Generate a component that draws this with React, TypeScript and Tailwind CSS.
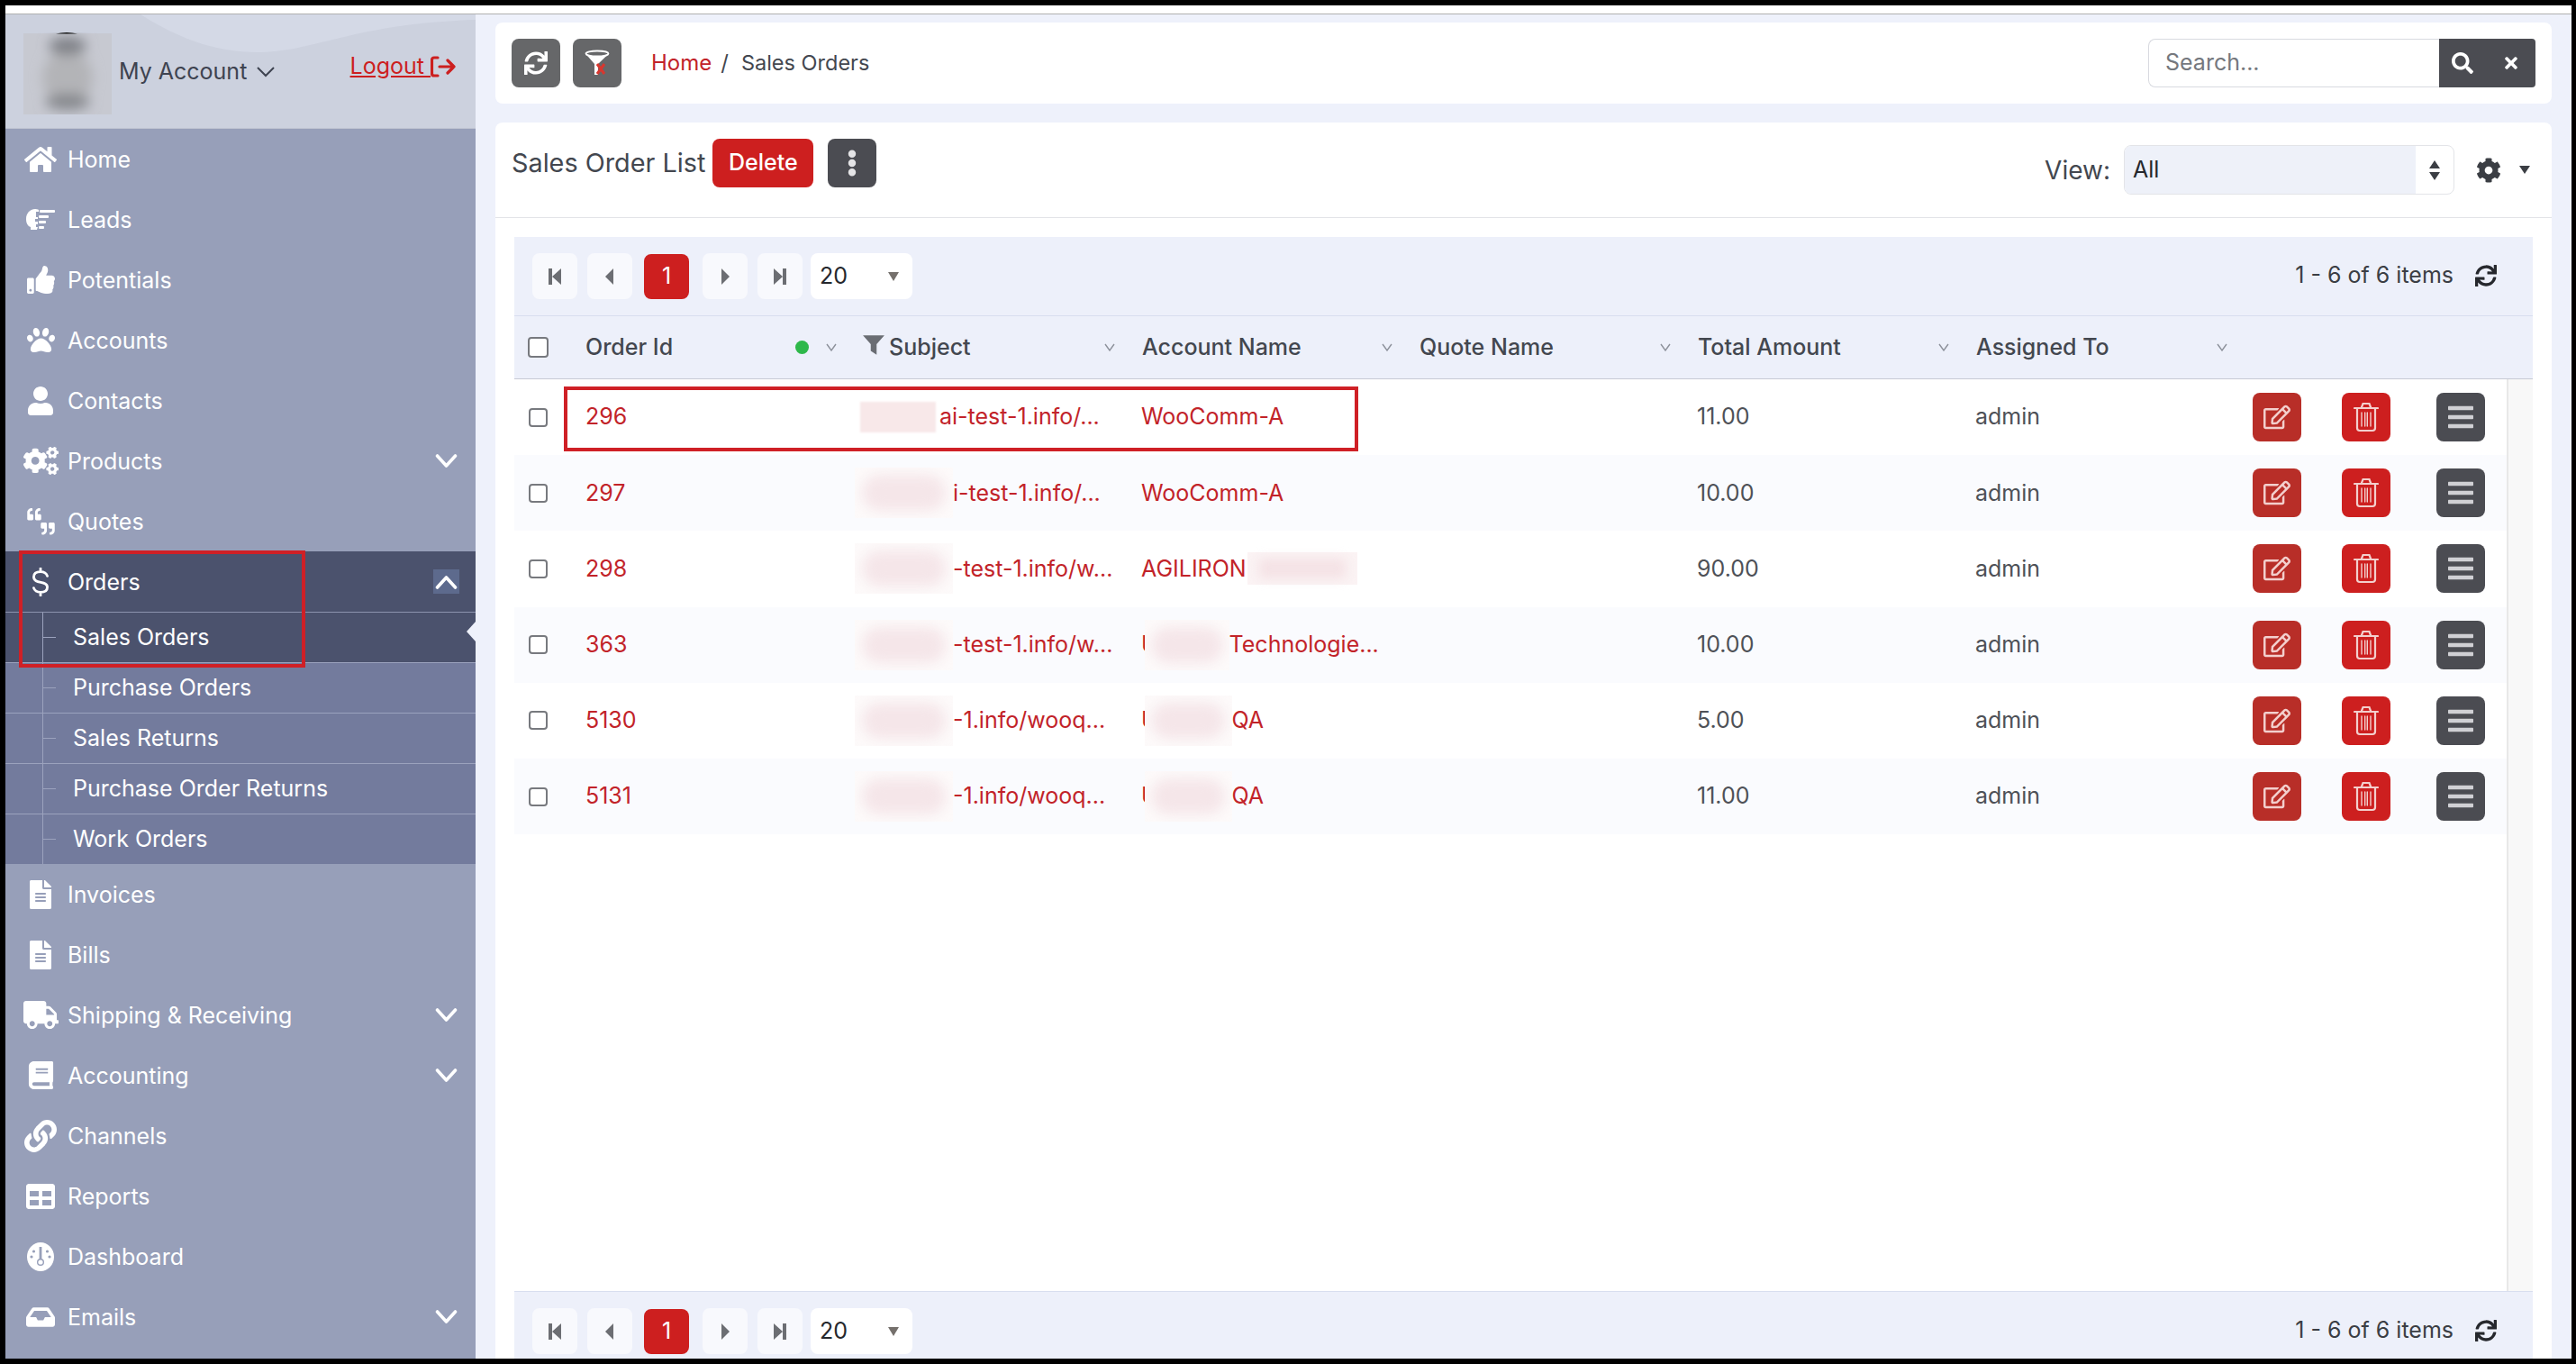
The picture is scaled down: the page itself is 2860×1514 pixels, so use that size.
import React from 'react';
import {
  FaHome, FaThumbsUp, FaPaw, FaUser, FaCogs, FaQuoteLeft, FaQuoteRight, FaFileAlt, FaTruck, FaBook, FaLink,
  FaTable, FaInbox, FaSync, FaSearch, FaTimes, FaCog, FaRegEdit, FaBars, FaEllipsisV,
} from 'react-icons/fa';

const LeadsIcon = () => (
  <svg width="32" height="23" viewBox="0 0 32 23" fill="white">
    <path d="M10 0C4 0 0 5 0 11c0 5 2 8 5 9v3h7l1-3h-2v-3h2v-3h-3v-3h3V9h-2V3h3V1c-1-.7-3-1-5-1z" />
    <rect x="15" y="1" width="17" height="3" rx="1" />
    <rect x="14" y="7" width="11" height="3" rx="1" />
    <rect x="14" y="13" width="8" height="3" rx="1" />
    <rect x="14" y="19" width="6" height="3" rx="1" />
  </svg>
);

const QuotesIcon = () => (
  <span className="flex w-[35px] h-[31px] flex-col justify-between">
    <FaQuoteLeft size={20} />
    <FaQuoteRight size={20} className="self-end" />
  </span>
);

const DollarIcon = () => (
  <svg width="20" height="32" viewBox="0 0 20 34" fill="none" stroke="white" strokeWidth="3" strokeLinecap="round">
    <path d="M10 1v4M10 29v4M18 10c-1-3-4-5-8-5-5 0-8 2-8 6 0 9 16 4 16 12 0 4-3 6-8 6-4 0-7-2-8-5" />
  </svg>
);

const GaugeIcon = () => (
  <svg width="32" height="32" viewBox="0 0 30 32">
    <ellipse cx="15" cy="16" rx="15" ry="16" fill="white" />
    <rect x="13.6" y="5" width="2.8" height="15" fill="#979fb9" />
    <circle cx="15" cy="22" r="4" fill="#979fb9" />
    <circle cx="15" cy="22" r="2.6" fill="white" />
    <circle cx="5" cy="16" r="1.6" fill="#979fb9" />
    <circle cx="7.5" cy="10" r="1.6" fill="#979fb9" />
    <circle cx="25" cy="16" r="1.6" fill="#979fb9" />
    <circle cx="22.5" cy="10" r="1.6" fill="#979fb9" />
  </svg>
);

const ChevronDown = ({ up = false }: { up?: boolean }) => (
  <svg width="25" height="16" viewBox="0 0 24 16" fill="none" stroke="white" strokeWidth="3.6" strokeLinecap="round" strokeLinejoin="round">
    <path d={up ? 'M2 14L12 3l10 11' : 'M2 2l10 11L22 2'} />
  </svg>
);

const HeadChevron = () => (
  <svg width="12" height="9" viewBox="0 0 12 9" fill="none" stroke="#8d919b" strokeWidth="1.4">
    <path d="M1 1l5 7 5-7" />
  </svg>
);

const TrashIcon = () => (
  <svg width="28" height="34" viewBox="0 0 28 34" fill="none" stroke="#f3cfcd" strokeWidth="2.2" strokeLinecap="round">
    <path d="M1 7h26M9 6l1.500-4h7L19 6M4 8v21a3 3 0 0 0 3 3h14a3 3 0 0 0 3-3V8" />
    <path d="M9 12v15M12.700 12v15M15.300 12v15M19 12v15" strokeWidth="1.400" />
  </svg>
);

const ClearFilterIcon = () => (
  <svg width="30" height="30" viewBox="0 0 30 30" fill="none">
    <ellipse cx="15" cy="4.500" rx="12.500" ry="3" stroke="white" strokeWidth="1.800" />
    <path d="M2.500 5L12 16v12h4V16l11.500-11c-4 3-21 3-25 0z" fill="white" />
    <path d="M15 16l8 11M23 16l-8 11" stroke="#d8372f" strokeWidth="3" />
  </svg>
);

const LogoutIcon = () => (
  <svg width="28" height="24" viewBox="0 0 28 24" fill="none" stroke="#cc1f1f" strokeWidth="3.200" strokeLinecap="round" strokeLinejoin="round">
    <path d="M8 2H4a2.500 2.500 0 0 0-2.500 2.500v15A2.500 2.500 0 0 0 4 22h4M10 12h16M19 5l7 7-7 7" />
  </svg>
);

const PageGlyph = ({ d }: { d: string }) => (
  <svg width="16" height="20" viewBox="0 0 16 20" fill="#6c6e73"><path d={d} /></svg>
);

const AvatarBlur = () => (
  <svg width="98" height="91" viewBox="0 0 98 91" className="shrink-0">
    <defs>
      <filter id="avatar-blur" x="-30%" y="-30%" width="160%" height="160%"><feGaussianBlur stdDeviation="7" /></filter>
    </defs>
    <rect y="1" width="98" height="90" fill="#c7c9d1" />
    <g filter="url(#avatar-blur)">
      <ellipse cx="49" cy="50" rx="28" ry="30" fill="#b3b4b7" />
      <ellipse cx="49" cy="15" rx="21" ry="10" fill="#7f8187" />
      <ellipse cx="49" cy="77" rx="25" ry="9" fill="#85878c" />
    </g>
    <path d="M36 1.500C44-.5 52-.5 60 1.500z" fill="#111" />
  </svg>
);

const navTop = [
  { label: 'Home', icon: <FaHome size={36} /> },
  { label: 'Leads', icon: <LeadsIcon /> },
  { label: 'Potentials', icon: <FaThumbsUp size={31} /> },
  { label: 'Accounts', icon: <FaPaw size={31} /> },
  { label: 'Contacts', icon: <FaUser size={32} /> },
  { label: 'Products', icon: <FaCogs size={39} />, more: true },
  { label: 'Quotes', icon: <QuotesIcon /> },
];

const navBottom = [
  { label: 'Invoices', icon: <FaFileAlt size={32} /> },
  { label: 'Bills', icon: <FaFileAlt size={32} /> },
  { label: 'Shipping & Receiving', icon: <FaTruck size={39} />, more: true },
  { label: 'Accounting', icon: <FaBook size={31} />, more: true },
  { label: 'Channels', icon: <FaLink size={36} /> },
  { label: 'Reports', icon: <FaTable size={32} /> },
  { label: 'Dashboard', icon: <GaugeIcon /> },
  { label: 'Emails', icon: <FaInbox size={32} />, more: true },
];

const subNav = ['Sales Orders', 'Purchase Orders', 'Sales Returns', 'Purchase Order Returns', 'Work Orders'];

function NavItem({ label, icon, more }: { label: string; icon: React.ReactNode; more?: boolean }) {
  return (
    <div className="flex h-[67px] items-center text-white shrink-0">
      <span className="ml-[19px] mr-[10px] flex w-[40px] justify-center shrink-0">{icon}</span>
      <span className="mt-[2px] text-[25px]">{label}</span>
      {more && <span className="ml-auto mr-[20px]"><ChevronDown /></span>}
    </div>
  );
}

function Sidebar() {
  return (
    <aside className="w-[522px] shrink-0 bg-[#979fb9] flex flex-col">
      <div className="relative h-[127px] shrink-0 bg-[#ccd1de] flex items-start overflow-hidden border-b border-[#bfc4d2]">
        <svg className="absolute inset-0" width="522" height="127" viewBox="0 0 522 127">
          <path d="M150 0C182 20 225 42 279 42 343 42 386 10 522 6V0z" fill="#d4d9e6" />
        </svg>
        <div className="relative flex items-start pl-[20px] pt-[20px] w-full">
          <AvatarBlur />
          <span className="ml-[8px] mt-[25px] text-[25px] text-[#3e4350]">My Account</span>
          <svg className="ml-[11px] mt-[38px]" width="20" height="12" viewBox="0 0 20 12" fill="none" stroke="#3e4350" strokeWidth="2"><path d="M1 1l9 9 9-9" /></svg>
          <span className="ml-auto mr-[22px] mt-[19px] flex items-center text-[#cc1f1f] text-[25px]">
            <span className="underline underline-offset-2 whitespace-pre">Logout </span>
            <LogoutIcon />
          </span>
        </div>
      </div>
      {navTop.map(item => <NavItem key={item.label} {...item} />)}
      <div className="flex h-[67px] items-center text-white bg-[#4b526d] shrink-0">
        <span className="ml-[19px] mr-[10px] flex w-[40px] justify-center shrink-0"><DollarIcon /></span>
        <span className="mt-[2px] text-[25px]">Orders</span>
        <span className="ml-auto mr-[18px] w-[29px] h-[27px] bg-[#5d6a8d] flex items-center justify-center"><ChevronDown up /></span>
      </div>
      {subNav.map((s, i) => (
        <div key={s} className={i === 0 ? 'relative flex h-[56px] items-stretch text-white border-t border-[#8c93ae] bg-[#4b526d] shrink-0' : 'relative flex h-[56px] items-stretch text-white border-t border-[#9ba2bd] bg-[#737b9d] shrink-0'}>
          <span className="w-[41px] shrink-0" />
          <span className="w-[15px] shrink-0 flex items-center border-l border-[#9ba2bd]"><span className="h-px w-full bg-[#9ba2bd]" /></span>
          <span className="ml-[19px] mt-[1px] self-center text-[25px]">{s}</span>
          {i === 0 && <span className="absolute right-0 top-[10px] border-y-[11px] border-r-[10px] border-y-transparent border-r-[#eef1fb]" />}
        </div>
      ))}
      {navBottom.map(item => <NavItem key={item.label} {...item} />)}
    </aside>
  );
}

function Pager() {
  const btn = 'w-[50px] h-[51px] rounded-[8px] bg-[#f8f9fd] flex items-center justify-center';
  return (
    <div className="flex items-center pl-[20px]">
      <span className={btn}><PageGlyph d="M1 1h4v18H1zM15 1v18L5 10z" /></span>
      <span className={btn + ' ml-[11px]'}><PageGlyph d="M12 1v18L3 10z" /></span>
      <span className="ml-[13px] w-[50px] h-[50px] rounded-[8px] bg-[#cd1f1f] text-white flex items-center justify-center text-[25px]">1</span>
      <span className={btn + ' ml-[15px]'}><PageGlyph d="M4 1v18l9-9z" /></span>
      <span className={btn + ' ml-[11px]'}><PageGlyph d="M1 1v18l10-9zM11 1h4v18h-4z" /></span>
      <span className="ml-[9px] w-[113px] h-[51px] rounded-[8px] bg-white flex items-center pl-[10px] text-[25px] text-[#26282d]">
        20
        <svg className="ml-auto mr-[14px]" width="14" height="12" viewBox="0 0 14 12" fill="#75706c"><path d="M1 1h12L7 11z" /></svg>
      </span>
    </div>
  );
}

function GridToolbar() {
  return (
    <div className="h-[87px] shrink-0 bg-[#edf0fa] flex items-center justify-between">
      <Pager />
      <div className="flex items-center text-[25px] text-[#3b3e44] pr-[40px] -mt-[2px]">
        1 - 6 of 6 items
        <FaSync size={24} className="ml-[24px] text-[#26282d]" />
      </div>
    </div>
  );
}

const headCell = 'flex items-center text-[25px] font-medium text-[#43474f] pr-[15px]';

function Header() {
  return (
    <div className="h-[71px] shrink-0 bg-[#edf0fa] border-y border-[#d8deef] border-b-[#c7cad4] grid grid-cols-[64px_320px_298px_308px_309px_309px_309px_1fr]">
      <div className="flex items-center pl-[15px]"><span className="w-[23px] h-[23px] rounded-[4px] bg-white border-2 border-[#77797e]" /></div>
      <div className="flex items-center text-[25px] font-medium text-[#43474f] pl-[15px] pr-[26px]">
        Order Id
        <span className="ml-auto w-[15px] h-[15px] rounded-full bg-[#2eb84a]" />
        <span className="ml-[19px]"><HeadChevron /></span>
      </div>
      <div className={headCell + ' pl-[2px]'}>
        <svg className="mr-[4px] -mt-[6px]" width="26" height="24" viewBox="0 0 24 22" fill="#6a6d73"><path d="M1 1h22l-8 9v11l-6-4v-7z" /></svg>
        Subject
        <span className="ml-auto"><HeadChevron /></span>
      </div>
      {['Account Name', 'Quote Name', 'Total Amount', 'Assigned To'].map(h => (
        <div key={h} className={headCell + ' pl-[15px]'}>{h}<span className="ml-auto"><HeadChevron /></span></div>
      ))}
    </div>
  );
}

// blurred-out bits of the subject / account cells, they sit over the text
const SoftPatch = ({ w }: { w: string }) => (
  <span className={w + ' relative h-[56px] shrink-0 bg-[#fdfafa] overflow-hidden flex items-center justify-center'}>
    <span className="w-[85%] h-[40px] rounded-full bg-[#f5e6e9] blur-[7px]" />
  </span>
);

const rows = [
  {
    id: '296',
    subject: <><span className="w-[84px] h-[34px] shrink-0 bg-[#f8e8e9] blur-[1px]" /><span className="ml-[4px]">ai-test-1.info/...</span></>,
    account: 'WooComm-A', amount: '11.00',
  },
  { id: '297', subject: <><SoftPatch w="w-[109px]" />i-test-1.info/...</>, account: 'WooComm-A', amount: '10.00' },
  {
    id: '298', subject: <><SoftPatch w="w-[109px]" />-test-1.info/w...</>,
    account: <>AGILIRON<span className="ml-[1px] w-[122px] h-[36px] bg-[#fbf3f4] flex items-center justify-center"><span className="w-[96px] h-[22px] bg-[#f4e2e5] blur-[6px]" /></span></>,
    amount: '90.00',
  },
  {
    id: '363', subject: <><SoftPatch w="w-[109px]" />-test-1.info/w...</>,
    account: <>U<span className="-ml-[15px] flex"><SoftPatch w="w-[94px]" /></span>Technologie...</>, amount: '10.00',
  },
  {
    id: '5130', subject: <><SoftPatch w="w-[109px]" />-1.info/wooq...</>,
    account: <>U<span className="-ml-[15px] flex"><SoftPatch w="w-[97px]" /></span>QA</>, amount: '5.00',
  },
  {
    id: '5131', subject: <><SoftPatch w="w-[109px]" />-1.info/wooq...</>,
    account: <>U<span className="-ml-[15px] flex"><SoftPatch w="w-[97px]" /></span>QA</>, amount: '11.00',
  },
];

function Row({ row, index }: { row: (typeof rows)[number]; index: number }) {
  return (
    <div className={index % 2 === 1 ? 'h-[84.2px] bg-[#fafbfe] grid grid-cols-[64px_320px_298px_308px_309px_309px_309px_1fr] text-[25px]' : 'h-[84.2px] bg-white grid grid-cols-[64px_320px_298px_308px_309px_309px_309px_1fr] text-[25px]'}>
      <div className="flex items-center pl-[16px]"><span className="w-[21px] h-[21px] rounded-[4px] bg-white border-2 border-[#77797e]" /></div>
      <div className="flex items-center pl-[15px] text-[#c22329]">{row.id}</div>
      <div className={index === 0 ? 'flex items-center text-[#c22329] whitespace-nowrap' : 'flex items-center -ml-[6px] text-[#c22329] whitespace-nowrap'}>{row.subject}</div>
      <div className="flex items-center pl-[14px] text-[#c22329] whitespace-nowrap">{row.account}</div>
      <div />
      <div className="flex items-center pl-[14px] text-[#4e5157]">{row.amount}</div>
      <div className="flex items-center pl-[14px] text-[#4e5157]">admin</div>
      <div className="flex items-center pl-[13px]">
        <span className="w-[54px] h-[54px] rounded-[8px] bg-[#b82e28] flex items-center justify-center text-[#f3cfcd]"><FaRegEdit size={30} /></span>
        <span className="ml-[45px] w-[54px] h-[54px] rounded-[8px] bg-[#cd1f1f] flex items-center justify-center"><TrashIcon /></span>
        <span className="ml-[51px] w-[54px] h-[54px] rounded-[8px] bg-[#4b4c52] flex items-center justify-center text-[#d0d0d4]"><FaBars size={32} /></span>
      </div>
    </div>
  );
}

export default function App() {
  return (
    <div className="relative w-[2860px] h-[1514px] bg-black pt-[6px] pl-[6px] pr-[5px] pb-[6px] overflow-hidden font-['Inter',sans-serif]">
      <div className="h-[10px] bg-white border-b border-[#b0b0b0]" />
      <div className="flex h-[1492px]">
        <Sidebar />
        <main className="flex-1 min-w-0 bg-[#eef1fb] pl-[22px] pr-[22px] pt-[9px] overflow-hidden flex flex-col">
          {/* top bar */}
          <div className="h-[90px] shrink-0 bg-white rounded-[8px] flex items-center px-[18px]">
            <span className="w-[54px] h-[54px] rounded-[8px] bg-[#666769] flex items-center justify-center text-white"><FaSync size={26} /></span>
            <span className="ml-[14px] w-[54px] h-[54px] rounded-[8px] bg-[#666769] flex items-center justify-center"><ClearFilterIcon /></span>
            <span className="ml-[33px] text-[24px] text-[#c22329]">Home</span>
            <span className="ml-[10px] text-[24px] text-[#43474f]">/</span>
            <span className="ml-[14px] text-[23.500px] text-[#43474f]">Sales Orders</span>
            <div className="ml-auto flex h-[54px]">
              <span className="w-[323px] bg-white border border-[#d8dae0] border-r-0 rounded-l-[8px] flex items-center pl-[18px] text-[25px] text-[#75787e]">Search...</span>
              <span className="w-[107px] bg-[#4b4c52] rounded-r-[4px] flex items-center justify-between pl-[14px] pr-[17px] text-white">
                <FaSearch size={24} />
                <FaTimes size={20} />
              </span>
            </div>
          </div>
          {/* list title */}
          <div className="mt-[21px] h-[106px] shrink-0 bg-white rounded-t-[8px] border-b border-[#e3e4e8] flex items-start px-[18px]">
            <span className="mt-[18px] h-[54px] flex items-center text-[28.800px] text-[#43474f]">Sales Order List</span>
            <span className="ml-[8px] mt-[18px] w-[112px] h-[54px] rounded-[8px] bg-[#cd1f1f] text-white flex items-center justify-center text-[25px] font-medium">Delete</span>
            <span className="ml-[16px] mt-[18px] w-[54px] h-[54px] rounded-[8px] bg-[#4b4c52] text-[#e4e4e6] flex items-center justify-center"><FaEllipsisV size={30} /></span>
            <div className="ml-auto mr-[6px] mt-[25px] flex items-center h-[55px]">
              <span className="text-[28px] text-[#43474f]">View:</span>
              <span className="ml-[15px] w-[367px] h-[55px] rounded-[8px] border border-[#e3e4e8] bg-white flex overflow-hidden">
                <span className="flex-1 bg-[#eef1f9] flex items-center pl-[9px] text-[25px] text-[#26282d]">All</span>
                <span className="w-[42px] flex items-center justify-center">
                  <svg width="14" height="24" viewBox="0 0 14 24" fill="#3b3e44"><path d="M7 1l6 9H1zM1 14h12l-6 9z" /></svg>
                </span>
              </span>
              <FaCog size={28} className="ml-[24px] text-[#3b3e44]" />
              <svg className="ml-[20px]" width="12" height="9" viewBox="0 0 12 9" fill="#3b3e44"><path d="M0 0h12L6 9z" /></svg>
            </div>
          </div>
          {/* grid */}
          <div className="flex-1 min-h-0 bg-white pt-[21px] px-[21px]">
            <GridToolbar />
            <Header />
            <div className="h-[1012px] flex shrink-0">
              <div className="flex-1 min-w-0">
                {rows.map((r, i) => <Row key={r.id} row={r} index={i} />)}
              </div>
              <div className="w-[29px] shrink-0 bg-[#f8f8f8] border-l-2 border-[#e8e8e8]" />
            </div>
            <div className="border-t border-[#d8deef]"><GridToolbar /></div>
          </div>
        </main>
      </div>
      {/* annotation boxes from the screenshot */}
      <div className="absolute left-[21px] top-[611px] w-[318px] h-[130px] border-4 border-[#cf2026]" />
      <div className="absolute left-[626px] top-[429px] w-[882px] h-[72px] border-4 border-[#cf2026]" />
    </div>
  );
}
